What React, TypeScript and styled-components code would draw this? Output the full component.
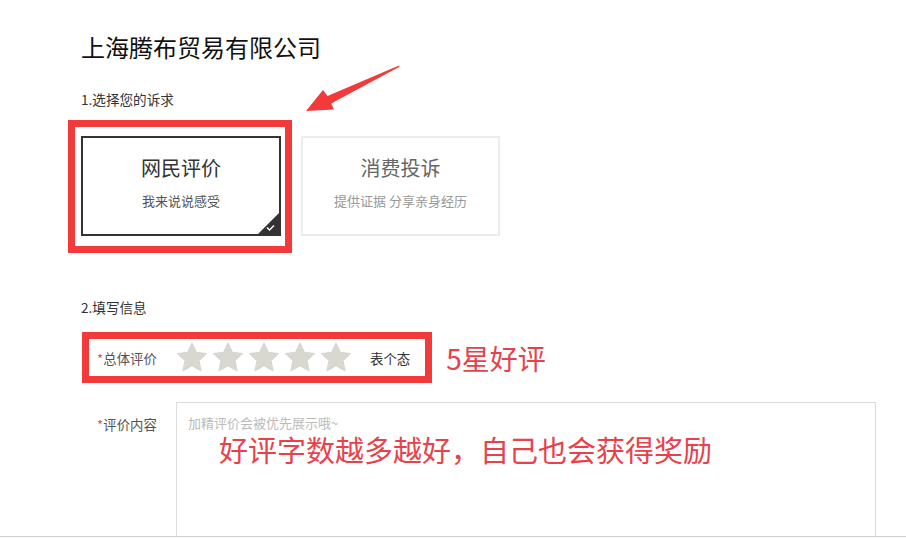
import React from "react";
import styled, { createGlobalStyle } from "styled-components";

const GlobalStyle = createGlobalStyle`
  html, body { margin: 0; padding: 0; background: #fff; }
  body { font-family: "Noto Sans CJK SC", "Noto Sans", sans-serif; color: #333; }
  * { box-sizing: border-box; }
`;

const Page = styled.div`
  position: relative;
  width: 906px;
  height: 537px;
  overflow: hidden;
  border-bottom: 1px solid #cfcfcf;
  padding: 31px 0 0 81px;
`;

const Title = styled.h1`
  margin: 0;
  font-size: 24px;
  line-height: 32px;
  font-weight: 400;
  color: #111;
`;

const StepLabel = styled.div<{ $top: number }>`
  margin-top: ${(p) => p.$top}px;
  font-size: 13.6px;
  line-height: 20px;
  color: #333;
`;

const CardRow = styled.div`
  display: flex;
  gap: 20px;
  margin-top: 27px;
`;

const Annotated = styled.div`
  position: relative;
`;

const Highlight = styled.div<{ $l: number; $t: number; $w: number; $h: number }>`
  position: absolute;
  left: ${(p) => p.$l}px;
  top: ${(p) => p.$t}px;
  width: ${(p) => p.$w}px;
  height: ${(p) => p.$h}px;
  border: 7px solid #f23a3a;
  pointer-events: none;
`;

const Card = styled.div<{ $active?: boolean }>`
  position: relative;
  width: ${(p) => (p.$active ? 200 : 199)}px;
  height: 100px;
  border: 2px solid ${(p) => (p.$active ? "#333" : "#ececec")};
  display: flex;
  flex-direction: column;
  align-items: center;
  padding-top: 16px;
  background: #fff;
`;

const CardTitle = styled.div<{ $active?: boolean }>`
  font-size: 20px;
  line-height: 28px;
  color: ${(p) => (p.$active ? "#333" : "#666")};
`;

const CardSub = styled.div<{ $active?: boolean }>`
  margin-top: 9px;
  font-size: 13px;
  line-height: 20px;
  color: ${(p) => (p.$active ? "#555" : "#999")};
`;

const Corner = styled.div`
  position: absolute;
  right: 0;
  bottom: 0;
  width: 21px;
  height: 21px;
`;

const RatingLine = styled.div`
  display: flex;
  align-items: center;
  margin-top: 22px;
  height: 37px;
`;

const RatingRow = styled.div`
  position: relative;
  display: flex;
  align-items: center;
  height: 37px;
`;

const FieldLabel = styled.div`
  width: 95px;
  padding-left: 16px;
  font-size: 13.4px;
  line-height: 20px;
  color: #555;
  white-space: nowrap;
`;

const Req = styled.span`
  color: #e4573a;
`;

const Stars = styled.div`
  display: flex;
  gap: 4px;
`;

const Mood = styled.div`
  margin-left: 18px;
  font-size: 13.4px;
  line-height: 20px;
  color: #333;
`;

const Note = styled.div`
  margin-left: 36px;
  font-size: 28px;
  line-height: 36px;
  color: #e8414a;
`;

const ContentRow = styled.div`
  display: flex;
  align-items: flex-start;
  margin-top: 26px;
`;

const ContentLabel = styled(FieldLabel)`
  margin-top: 12px;
`;

const TextBox = styled.div`
  position: relative;
  width: 700px;
  height: 200px;
  border: 1px solid #dcdcdc;
  padding: 11px 11px;
`;

const Placeholder = styled.div`
  font-size: 13px;
  line-height: 18px;
  color: #bbb;
`;

const BigNote = styled.div`
  position: absolute;
  left: 42px;
  top: 31px;
  font-size: 29px;
  line-height: 30px;
  color: #e8414a;
  white-space: nowrap;
`;

const Arrow = styled.svg`
  position: absolute;
  left: 300px;
  top: 60px;
`;

const Star = () => (
  <svg width="32" height="31" viewBox="0 0 24 23">
    <polygon
      points="12,0.8 15.2,7.6 22.8,8.6 17.2,13.8 18.7,21.3 12,17.6 5.3,21.3 6.8,13.8 1.2,8.6 8.8,7.6"
      fill="#d8d8d1"
      stroke="#d8d8d1"
      strokeWidth="1"
      strokeLinejoin="round"
    />
  </svg>
);

export default function App() {
  return (
    <>
      <GlobalStyle />
      <Page>
        <Title>上海腾布贸易有限公司</Title>
        <StepLabel $top={26}>1.选择您的诉求</StepLabel>
        <CardRow>
          <Annotated>
            <Card $active>
              <CardTitle $active>网民评价</CardTitle>
              <CardSub $active>我来说说感受</CardSub>
              <Corner>
                <svg width="21" height="21" viewBox="0 0 21 21">
                  <polygon points="21,0 21,21 0,21" fill="#333" />
                  <polyline points="9,14.5 11.5,17 16,12.5" fill="none" stroke="#fff" strokeWidth="1.4" />
                </svg>
              </Corner>
            </Card>
            <Highlight $l={-13} $t={-16} $w={224} $h={133} />
          </Annotated>
          <Card>
            <CardTitle>消费投诉</CardTitle>
            <CardSub>提供证据 分享亲身经历</CardSub>
          </Card>
        </CardRow>
        <StepLabel $top={61}>2.填写信息</StepLabel>
        <RatingLine>
          <RatingRow>
            <FieldLabel>
              <Req>*</Req>总体评价
            </FieldLabel>
            <Stars>
              <Star />
              <Star />
              <Star />
              <Star />
              <Star />
            </Stars>
            <Mood>表个态</Mood>
            <Highlight $l={1} $t={-7} $w={350} $h={51} />
          </RatingRow>
          <Note>5星好评</Note>
        </RatingLine>
        <ContentRow>
          <ContentLabel>
            <Req>*</Req>评价内容
          </ContentLabel>
          <TextBox>
            <Placeholder>加精评价会被优先展示哦~</Placeholder>
            <BigNote>好评字数越多越好，自己也会获得奖励</BigNote>
          </TextBox>
        </ContentRow>
        <Arrow width="106" height="56" viewBox="0 0 106 56">
          <polygon
            points="99,5.5 27.5,36 23,30 6,51 34,49.5 31.2,43.5 99.5,6.8"
            fill="#f23a3a"
          />
        </Arrow>
      </Page>
    </>
  );
}
